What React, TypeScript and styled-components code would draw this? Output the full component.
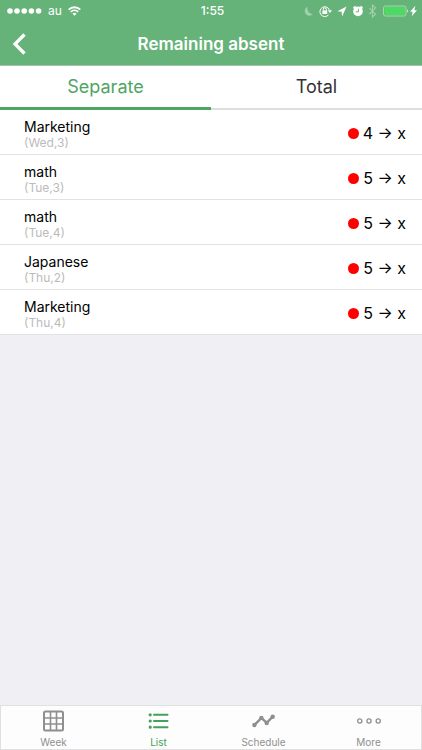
import React, { useState } from "react";
import styled, { createGlobalStyle } from "styled-components";

const GlobalStyle = createGlobalStyle`
  *, *::before, *::after { box-sizing: border-box; }
  body {
    margin: 0;
    background: #efeff4;
    font-family: Inter, "Liberation Sans", sans-serif;
    color: #000;
  }
  button { font: inherit; border: 0; padding: 0; background: none; cursor: pointer; }
  svg { display: block; flex: none; }
`;

const Screen = styled.div`
  display: flex;
  flex-direction: column;
  min-height: 100vh;
`;

const Header = styled.header`
  background: #66b379;
  color: #fff;
  border-bottom: 1px solid #a3c4ab;
`;

const StatusBar = styled.div`
  display: grid;
  grid-template-columns: 1fr auto 1fr;
  align-items: center;
  height: 22px;
  padding: 0 4px 0 7px;
`;

const StatusGroup = styled.div<{ $end?: boolean }>`
  display: flex;
  align-items: center;
  gap: 6px;
  justify-content: ${(p) => (p.$end ? "flex-end" : "flex-start")};
`;

const Carrier = styled.span`
  font-size: 12px;
  line-height: 16px;
`;

const Clock = styled.time`
  font-size: 12px;
  line-height: 16px;
  font-weight: 500;
`;

const TitleBar = styled.div`
  display: grid;
  grid-template-columns: 44px 1fr 44px;
  align-items: center;
  height: 43px;
`;

const BackButton = styled.button`
  display: flex;
  align-items: center;
  height: 43px;
  padding-left: 12px;
  color: #fff;
`;

const Title = styled.h1`
  margin: 0;
  font-size: 17px;
  line-height: 22px;
  font-weight: 600;
  text-align: center;
`;

const Tabs = styled.div`
  display: flex;
  height: 44px;
  background: #fff;
`;

const Tab = styled.button<{ $active: boolean }>`
  flex: 1;
  padding-bottom: 2px;
  font-size: 18px;
  line-height: 24px;
  color: ${(p) => (p.$active ? "#4fa564" : "#333")};
  box-shadow: inset 0 ${(p) => (p.$active ? "-3px #4fa564" : "-2px #dedede")};
`;

const List = styled.ul`
  flex: 1;
  margin: 0;
  padding: 0;
  list-style: none;
`;

const Row = styled.li`
  display: flex;
  align-items: center;
  justify-content: space-between;
  height: 45px;
  padding: 2px 16px 0 24px;
  background: #fff;
  border-bottom: 1px solid #e2e2e5;
`;

const Subject = styled.div`
  padding-top: 2px;
  font-size: 14px;
  line-height: 17px;
`;

const Period = styled.div`
  font-size: 12px;
  line-height: 15px;
  color: #bbb;
`;

const Remaining = styled.div`
  display: flex;
  align-items: center;
  gap: 4px;
  font-size: 16px;
  line-height: 24px;
`;

const Dot = styled.span`
  width: 11px;
  height: 11px;
  border-radius: 50%;
  background: #f00;
`;

const TabBar = styled.nav`
  display: flex;
  height: 45px;
  background: #fdfdfd;
  border: 1px solid #e0e0e3;
`;

const TabBarItem = styled.button<{ $active: boolean }>`
  flex: 1;
  display: flex;
  flex-direction: column;
  align-items: center;
  gap: 2px;
  padding-top: 3px;
  font-size: 10px;
  line-height: 14px;
  color: ${(p) => (p.$active ? "#44a05b" : "#8f8f8f")};
`;

const SignalIcon = () => (
  <svg width="35" height="6" viewBox="0 0 35 6" fill="#fff">
    {[3, 10, 17.2, 24.4, 31.6].map((x) => (
      <circle key={x} cx={x} cy="3" r="2.8" />
    ))}
  </svg>
);

const WifiIcon = () => (
  <svg width="13" height="11" viewBox="0 0 13 11" fill="none" stroke="#fff" strokeWidth="1.9">
    <path d="M.7 3.6a8.3 8.3 0 0 1 11.6 0M2.8 5.9a5.3 5.3 0 0 1 7.4 0" />
    <path d="M6.5 9.8 4.5 7.7a2.9 2.9 0 0 1 4 0z" fill="#fff" stroke="none" />
  </svg>
);

const StatusIcons = () => (
  <svg width="115" height="14" viewBox="0 0 115 14" fill="none">
    <path d="M4.6 2.8a4.6 4.6 0 1 0 5.2 7.3A5.6 5.6 0 0 1 4.6 2.8z" fill="#a3d1ad" />
    <path d="M25.5 10.9a4.9 4.9 0 1 1 .9-5" stroke="#fff" strokeWidth="1" />
    <path d="m24.8 6.2 4.2.1-2.1 2.6z" fill="#fff" />
    <rect x="19.4" y="6.4" width="4.8" height="3.6" fill="#fff" />
    <path d="M20.3 6.6V5.3a1.5 1.5 0 0 1 3 0v1.3" stroke="#fff" />
    <path d="m43.6 2.4-9.2 4.9 4.3.5.4 4.6z" fill="#fff" />
    <circle cx="55" cy="7.4" r="4.8" fill="#fff" />
    <path d="m50.6 4.4 2-1.9M59.4 4.4l-2-1.9" stroke="#fff" strokeWidth="2" />
    <path d="M55.4 4.8v3h-2.6" stroke="#66b379" />
    <path d="m66.4 4.2 6.2 6-3.1 2.7V1.2l3.1 2.6-6.2 6.2" stroke="#a3d1ad" strokeWidth="1.1" />
    <rect x="80.5" y="2" width="22.5" height="10" rx="2" stroke="#a7d7ae" />
    <rect x="81.5" y="3" width="20.5" height="8" rx="1" fill="#4cd964" />
    <path d="M104 5.2c1.6.6 1.6 3 0 3.6z" fill="#c4e4ca" />
    <path d="m112.4 1.8-5.3 6h2.6l-1 4.4 5.3-6h-2.7z" fill="#fff" />
  </svg>
);

const BackIcon = () => (
  <svg width="15" height="22" viewBox="0 0 15 22" fill="none" stroke="#fff" strokeWidth="3.2">
    <path d="M12.5 1.5 3 11l9.5 9.5" />
  </svg>
);

const WeekIcon = () => (
  <svg width="24" height="24" viewBox="0 0 24 24" fill="none" stroke="currentColor" strokeWidth="1.6">
    <rect x="2" y="2.5" width="19" height="19" rx="1.5" strokeWidth="2" />
    <path d="M8.5 2v20M14.5 2v20M2 9h19M2 15h19" />
  </svg>
);

const ListIcon = () => (
  <svg width="24" height="24" viewBox="0 0 24 24" stroke="currentColor" strokeLinecap="round">
    <path d="M7 5.8h13.5M7 12h13.5M7 18.2h13.5" strokeWidth="2" />
    <path d="M3.2 5.8h.01M3.2 12h.01M3.2 18.2h.01" strokeWidth="3.2" />
  </svg>
);

const ScheduleIcon = () => (
  <svg width="24" height="24" viewBox="0 0 24 24" fill="currentColor">
    <path d="m2.4 16.1 7-7.2 5.3 5 6-6.2" fill="none" stroke="currentColor" strokeWidth="2.4" />
    <circle cx="2.4" cy="16" r="2.2" />
    <circle cx="9.4" cy="8.9" r="2.2" />
    <circle cx="14.7" cy="14" r="2.2" />
    <circle cx="20.7" cy="7.8" r="2.2" />
  </svg>
);

const MoreIcon = () => (
  <svg width="24" height="24" viewBox="0 0 24 24" fill="none" stroke="currentColor" strokeWidth="1.3">
    <circle cx="2.8" cy="12" r="2.1" />
    <circle cx="12" cy="12" r="2.1" />
    <circle cx="21.2" cy="12" r="2.1" />
  </svg>
);

const classes = [
  { subject: "Marketing", period: "(Wed,3)", left: 4 },
  { subject: "math", period: "(Tue,3)", left: 5 },
  { subject: "math", period: "(Tue,4)", left: 5 },
  { subject: "Japanese", period: "(Thu,2)", left: 5 },
  { subject: "Marketing", period: "(Thu,4)", left: 5 },
];

const sections = [
  { name: "Week", Icon: WeekIcon },
  { name: "List", Icon: ListIcon },
  { name: "Schedule", Icon: ScheduleIcon },
  { name: "More", Icon: MoreIcon },
];

export default function App() {
  const [tab, setTab] = useState("Separate");
  const [section, setSection] = useState("List");

  return (
    <>
      <GlobalStyle />
      <Screen>
        <Header>
          <StatusBar>
            <StatusGroup>
              <SignalIcon />
              <Carrier>au</Carrier>
              <WifiIcon />
            </StatusGroup>
            <Clock>1:55</Clock>
            <StatusGroup $end>
              <StatusIcons />
            </StatusGroup>
          </StatusBar>
          <TitleBar>
            <BackButton type="button" aria-label="Back">
              <BackIcon />
            </BackButton>
            <Title>Remaining absent</Title>
          </TitleBar>
        </Header>
        <Tabs role="tablist">
          {["Separate", "Total"].map((name) => (
            <Tab
              key={name}
              type="button"
              role="tab"
              aria-selected={tab === name}
              $active={tab === name}
              onClick={() => setTab(name)}
            >
              {name}
            </Tab>
          ))}
        </Tabs>
        <List>
          {classes.map((c) => (
            <Row key={c.subject + c.period}>
              <Subject>
                {c.subject}
                <Period>{c.period}</Period>
              </Subject>
              <Remaining>
                <Dot />
                {c.left} → x
              </Remaining>
            </Row>
          ))}
        </List>
        <TabBar>
          {sections.map(({ name, Icon }) => (
            <TabBarItem
              key={name}
              type="button"
              $active={section === name}
              onClick={() => setSection(name)}
            >
              <Icon />
              {name}
            </TabBarItem>
          ))}
        </TabBar>
      </Screen>
    </>
  );
}
